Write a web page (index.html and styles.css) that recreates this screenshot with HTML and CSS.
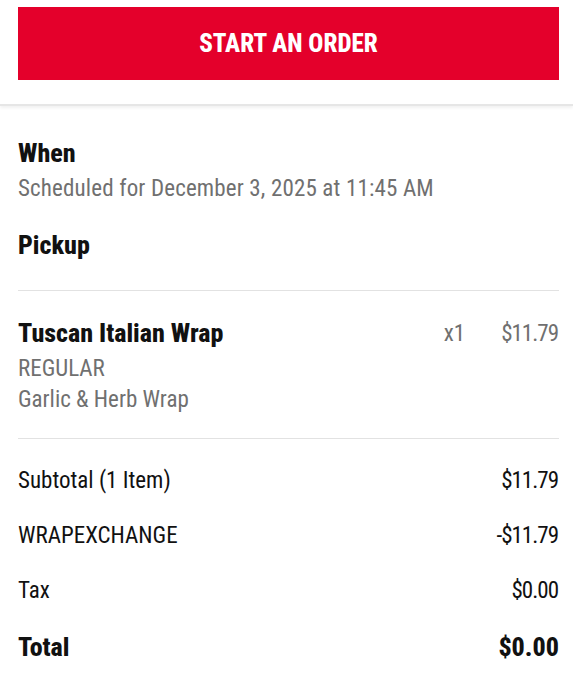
FILE: index.html
```html
<!DOCTYPE html>
<html lang="en">
<head>
    <meta charset="UTF-8">
    <meta name="viewport" content="width=device-width, initial-scale=1.0">
    <title>Order Summary</title>
    <link rel="stylesheet" href="styles.css">
</head>
<body>
    <div class="top-bar">
        <button class="order-button">START AN ORDER</button>
    </div>

    <div class="summary">
        <div class="when">
            <h2>When</h2>
            <p class="muted">Scheduled for December 3, 2025 at 11:45 AM</p>
        </div>
        <h2 class="pickup">Pickup</h2>

        <div class="item">
            <div class="item-info">
                <h2>Tuscan Italian Wrap</h2>
                <p class="muted">REGULAR</p>
                <p class="muted">Garlic &amp; Herb Wrap</p>
            </div>
            <div class="item-qty">x1</div>
            <div class="item-price amount">$11.79</div>
        </div>

        <div class="totals">
            <div class="row"><span>Subtotal (1 Item)</span><span class="amount">$11.79</span></div>
            <div class="row"><span>WRAPEXCHANGE</span><span class="amount">-$11.79</span></div>
            <div class="row"><span>Tax</span><span class="amount">$0.00</span></div>
            <div class="row total"><span>Total</span><span>$0.00</span></div>
        </div>
    </div>
</body>
</html>
```

FILE: styles.css
```css
body {
    margin: 0;
    padding: 0;
    background: #fff;
    color: #111;
    font-family: 'Roboto', 'DejaVu Sans Condensed', sans-serif;
    font-stretch: 75%;
}

h2, p {
    margin: 0;
}

.top-bar {
    padding: 7px 14px 24px 18px;
    border-bottom: 2px solid #e6e6e6;
    box-shadow: 0 2px 3px rgba(0, 0, 0, 0.06);
}

.order-button {
    display: block;
    width: 100%;
    height: 73px;
    border: none;
    background: #e4002b;
    color: #fff;
    font-family: inherit;
    font-stretch: inherit;
    font-size: 25px;
    font-weight: 800;
    cursor: pointer;
}

.summary {
    padding: 0 14px 0 18px;
}

h2 {
    font-size: 26px;
    font-weight: 800;
    color: #111;
}

.muted {
    font-size: 23px;
    line-height: 27px;
    color: #707070;
}

.when {
    padding-top: 32px;
}

.when .muted {
    margin-top: 7px;
    letter-spacing: 0.15px;
}

.pickup {
    padding: 28px 0 30px;
    border-bottom: 1px solid #e2e2e2;
}

.item {
    display: flex;
    align-items: flex-start;
    padding: 27px 0 23px;
    border-bottom: 1px solid #e2e2e2;
}

.item-info {
    flex: 1;
}

.item-info h2 {
    margin-bottom: 5px;
}

.item-info .muted {
    line-height: 31px;
}

.item-qty,
.item-price {
    font-size: 23px;
    color: #707070;
    padding-top: 2px;
}

.item-price {
    margin-left: 36px;
}

.amount {
    letter-spacing: -1px;
    padding-right: 1px;
}

.totals {
    padding-top: 28px;
}

.row {
    display: flex;
    justify-content: space-between;
    font-size: 23px;
    height: 55px;
}

.row.total {
    font-size: 26px;
    font-weight: 800;
}
```
